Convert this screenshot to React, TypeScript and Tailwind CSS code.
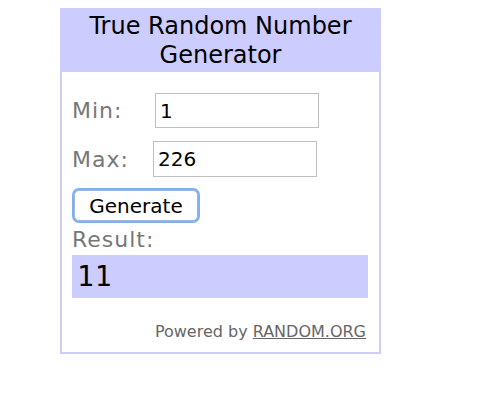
import React from "react";

export default function App() {
  return (
    <div
      className="w-[492px] h-[402px] bg-white"
      style={{ fontFamily: '"DejaVu Sans", Verdana, sans-serif' }}
    >
      <div className="absolute left-[60px] top-[8px] w-[321px] h-[346px] border-2 border-[#ccccff] flex flex-col bg-white">
        <div className="h-[62px] bg-[#ccccff] flex flex-col items-center justify-center text-[24px] leading-[29px] text-black">
          <div>True Random Number</div>
          <div>Generator</div>
        </div>
        <div className="pl-[10px] pr-[11px] flex flex-col">
          <div className="mt-[21px] flex items-center h-[35px]">
            <span className="w-[83px] text-[22px] tracking-[1px] text-[#777777]">Min:</span>
            <div className="w-[164px] h-[35px] border border-[#c0c0c0] flex items-center pl-[4px] text-[20px] text-black">
              1
            </div>
          </div>
          <div className="mt-[13px] flex items-center h-[36px]">
            <span className="w-[81px] text-[22px] tracking-[1px] text-[#777777]">Max:</span>
            <div className="w-[164px] h-[36px] border border-[#c0c0c0] flex items-center pl-[4px] text-[20px] text-black">
              226
            </div>
          </div>
          <div className="mt-[11px] w-[128px] h-[35px] rounded-[7px] bg-[#7fb0f0] p-[2px]">
            <div className="w-full h-full rounded-[5px] bg-white border border-[#a0b8d8] flex items-center justify-center text-[20px] text-black">
              Generate
            </div>
          </div>
          <div className="mt-[2px] text-[22px] tracking-[1px] leading-[29px] text-[#777777]">Result:</div>
          <div
            className="mt-[1px] h-[43px] bg-[#ccccff] flex items-center pl-[5px] text-[28px] tracking-[1px] text-black"
            style={{ fontFamily: '"DejaVu Sans Mono", monospace' }}
          >
            11
          </div>
          <div className="mt-[22px] text-right pr-[2px] text-[16px] leading-[24px] text-[#666666]">
            Powered by <span className="underline">RANDOM.ORG</span>
          </div>
        </div>
      </div>
    </div>
  );
}
